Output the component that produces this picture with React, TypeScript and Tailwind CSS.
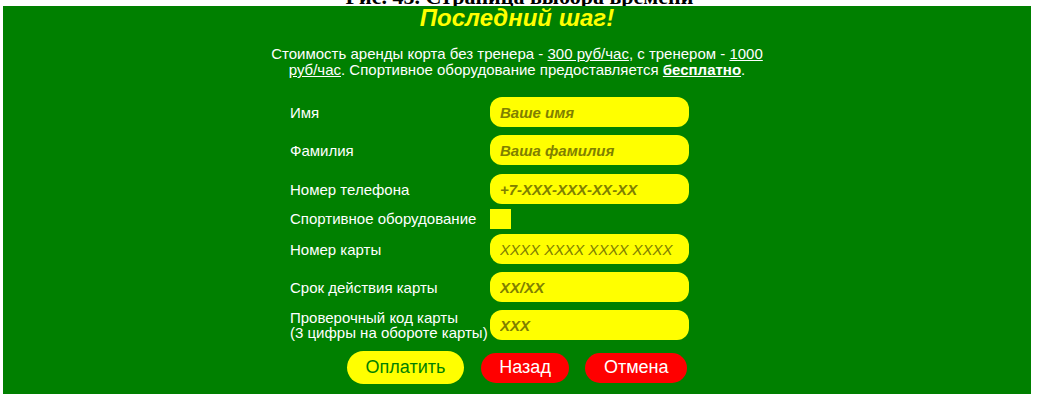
import React from 'react';

const fields = [
  { label: 'Имя', placeholder: 'Ваше имя', gap: 'mt-[19px]', bold: true },
  { label: 'Фамилия', placeholder: 'Ваша фамилия', gap: 'mt-[8px]', bold: true },
  { label: 'Номер телефона', placeholder: '+7-XXX-XXX-XX-XX', gap: 'mt-[9px]', bold: true },
];

const cardFields = [
  { label: 'Номер карты', placeholder: 'XXXX XXXX XXXX XXXX', gap: 'mt-[5px]', bold: false },
  { label: 'Срок действия карты', placeholder: 'XX/XX', gap: 'mt-[8px]', bold: true },
];

const Field = ({ label, placeholder, gap, bold }: { label: React.ReactNode; placeholder: string; gap: string; bold: boolean }) => (
  <div className={`flex items-center h-[30px] ${gap}`}>
    <div className="w-[200px] text-[15px] leading-[15px] text-white">{label}</div>
    <input
      className={`w-[199px] h-[30px] rounded-[12px] bg-[#ffff00] px-[10px] text-[15px] italic outline-none placeholder:text-[#808000] ${bold ? 'font-bold' : 'font-normal'}`}
      placeholder={placeholder}
    />
  </div>
);

export default function App() {
  return (
    <div className="w-[1039px] h-[403px] bg-white overflow-hidden font-['Liberation_Sans',Arial,sans-serif]">
      {/* caption of the figure, mostly cut off at the top */}
      <div className="h-[6px] overflow-hidden">
        <p className="mt-[-14px] text-center text-[22px] leading-[22px] font-bold text-black font-['Liberation_Serif',serif]">
          Рис. 45. Страница выбора времени
        </p>
      </div>

      <div className="ml-[3px] w-[1028px] h-[388px] bg-[#008000] flex flex-col">
        <h1 className="mt-[-2px] text-center text-[24px] leading-[28px] font-bold italic text-[#ffff00]">
          Последний шаг!
        </h1>

        <p className="mt-[14px] text-center text-[15px] leading-[16px] text-white whitespace-nowrap">
          Стоимость аренды корта без тренера - <span className="underline">300 руб/час</span>, с тренером - <span className="underline">1000</span>
          <br />
          <span className="underline">руб/час</span>. Спортивное оборудование предоставляется <span className="underline font-bold">бесплатно</span>.
        </p>

        <form className="ml-[287px] flex flex-col" onSubmit={(e) => e.preventDefault()}>
          {fields.map((f) => (
            <Field key={f.label} {...f} />
          ))}

          <div className="flex items-center h-[20px] mt-[5px]">
            <div className="w-[200px] text-[15px] text-white">Спортивное оборудование</div>
            <input type="checkbox" className="appearance-none w-[21px] h-[20px] bg-[#ffff00]" />
          </div>

          {cardFields.map((f) => (
            <Field key={f.label} {...f} />
          ))}

          <Field
            label={<>Проверочный код карты<br />(3 цифры на обороте карты)</>}
            placeholder="XXX"
            gap="mt-[8px]"
            bold
          />
        </form>

        <div className="mt-[11px] flex items-center justify-center">
          <button className="h-[33px] px-[19px] rounded-full bg-[#ffff00] text-[18px] text-[#008000]">Оплатить</button>
          <button className="ml-[17px] h-[30px] px-[18px] rounded-full bg-[#ff0000] text-[18px] text-white">Назад</button>
          <button className="ml-[16px] h-[30px] px-[19px] rounded-full bg-[#ff0000] text-[18px] text-white">Отмена</button>
        </div>
      </div>
    </div>
  );
}
